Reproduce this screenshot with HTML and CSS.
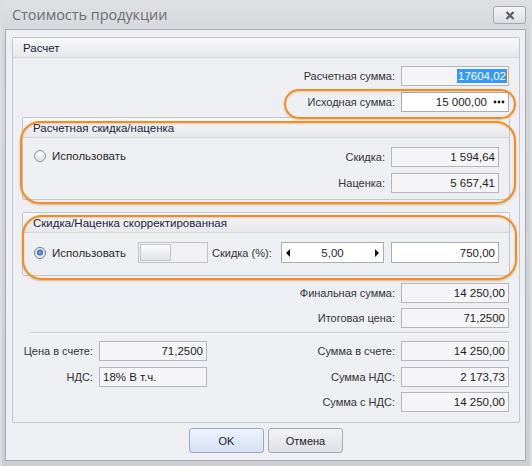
FILE: index.html
```html
<!DOCTYPE html>
<html lang="ru">
<head>
  <meta charset="UTF-8" />
  <title>Стоимость продукции</title>
  <link rel="stylesheet" href="styles.css">
</head>
<body>
  <div class="window">
    <div class="titlebar">
      <span class="title">Стоимость продукции</span>
      <button class="close">
        <svg width="10" height="9" viewBox="0 0 10 9"><path d="M1.5 1 L8.5 8 M8.5 1 L1.5 8" stroke="#5b5c62" stroke-width="2.2"/></svg>
      </button>
    </div>

    <div class="client">
      <div class="group main">
        <div class="group-head">Расчет</div>
        <div class="main-body">
          <div class="row first">
            <label>Расчетная сумма:</label>
            <div class="field tight"><span class="sel">17604,02</span><span class="caret"></span></div>
          </div>
          <div class="row">
            <label>Исходная сумма:</label>
            <div class="field edit">15 000,00
              <svg class="dots" width="12" height="4" viewBox="0 0 12 4"><circle cx="2" cy="2" r="1.4"/><circle cx="6" cy="2" r="1.4"/><circle cx="10" cy="2" r="1.4"/></svg>
            </div>
          </div>

          <div class="group sub calc">
            <div class="group-head">Расчетная скидка/наценка</div>
            <div class="sub-body">
              <div class="option"><span class="radio"></span>Использовать</div>
              <div class="rows">
                <div class="row"><label>Скидка:</label><div class="field">1 594,64</div></div>
                <div class="row"><label>Наценка:</label><div class="field">5 657,41</div></div>
              </div>
            </div>
          </div>

          <div class="group sub fixed">
            <div class="group-head">Скидка/Наценка скорректированная</div>
            <div class="sub-body line">
              <div class="option wide"><span class="radio on"></span>Использовать</div>
              <div class="track"><div class="thumb"></div></div>
              <label class="spin-label">Скидка (%):</label>
              <div class="spin"><span class="arrow left"></span>5,00<span class="arrow right"></span></div>
              <div class="field edit tall">750,00</div>
            </div>
          </div>

          <div class="row final">
            <label>Финальная сумма:</label>
            <div class="field">14 250,00</div>
          </div>
          <div class="row">
            <label>Итоговая цена:</label>
            <div class="field">71,2500</div>
          </div>

          <div class="sep"></div>

          <div class="invoice">
            <div class="lcol">
              <div class="row"><label>Цена в счете:</label><div class="field">71,2500</div></div>
              <div class="row"><label>НДС:</label><div class="field left">18% В т.ч.</div></div>
            </div>
            <div class="rcol">
              <div class="row"><label>Сумма в счете:</label><div class="field">14 250,00</div></div>
              <div class="row"><label>Сумма НДС:</label><div class="field">2 173,73</div></div>
              <div class="row"><label>Сумма с НДС:</label><div class="field">14 250,00</div></div>
            </div>
          </div>
        </div>
      </div>

      <div class="buttons">
        <button class="btn default">OK</button>
        <button class="btn">Отмена</button>
      </div>
    </div>

    <div class="ring ring-source"></div>
    <div class="ring ring-calc"></div>
    <div class="ring ring-fixed"></div>
  </div>
</body>
</html>
```

FILE: styles.css
```css
* {
  box-sizing: border-box;
}
body {
  margin: 0;
  background: #cfd0d5;
  font-family: "Liberation Sans", Arial, sans-serif;
  font-size: 11px;
  color: #2a2a2e;
}
.window {
  position: relative;
  width: 532px;
  height: 466px;
  display: flex;
  flex-direction: column;
  background: linear-gradient(#dfe0e3, #d3d4d9 40px, #cdced3);
  box-shadow: inset 2px 0 0 #dcdde1, inset -2px 0 0 #dcdde1;
}
.titlebar {
  height: 29px;
  display: flex;
  justify-content: space-between;
  align-items: flex-start;
  padding: 0 6px 0 12px;
}
.title {
  font-family: "Open Sans", sans-serif;
  font-size: 14.4px;
  line-height: 29px;
  color: #6b6c73;
}
.close {
  margin-top: 6px;
  width: 33px;
  height: 18px;
  padding: 0;
  border: 1px solid #a6a7ad;
  border-radius: 3px;
  background: linear-gradient(#f4f4f6, #dddee2);
  display: flex;
  align-items: center;
  justify-content: center;
}
.client {
  margin: 0 6px 5px 5px;
  height: 432px;
  border: 1px solid #a9aab0;
  background: #eeeff2;
  padding: 7px 5px 0 6px;
}
.group {
  border: 1px solid #c5c6cb;
  border-radius: 2px;
  background: #eeeff2;
}
.group-head {
  height: 20px;
  padding-left: 10px;
  display: flex;
  align-items: center;
  border-bottom: 1px solid #d6d7db;
  background: linear-gradient(#f7f7f9, #e7e8ec);
  color: #20233c;
  font-size: 11.5px;
}
.main-body {
  padding: 8px 0 10px 0;
}
.row {
  display: flex;
  justify-content: flex-end;
  align-items: center;
  gap: 6px;
  padding-right: 10px;
  margin-top: 6px;
}
.row.first {
  margin-top: 0;
}
.row label {
  color: #333338;
}
.field {
  width: 108px;
  height: 20px;
  border: 1px solid #b5b6bc;
  background: #f5f5f7;
  display: flex;
  align-items: center;
  justify-content: flex-end;
  padding: 0 3px;
  color: #1e1e22;
  font-size: 11.5px;
}
.field.edit {
  background: #fff;
  border-color: #abadb4;
}
.field.tall {
  height: 21px;
}
.field.left {
  justify-content: flex-start;
}
.field.tight {
  padding-right: 1px;
}
.sel {
  background: #3399ff;
  color: #fff;
  line-height: 14px;
  padding-left: 1px;
}
.caret {
  width: 1px;
  height: 14px;
  background: #c9722a;
}
.dots {
  margin-left: 6px;
  fill: #1a1a1a;
}
.sub {
  margin: 5px 9px 0 9px;
}
.fixed {
  margin-top: 12px;
}
.sub-body {
  display: flex;
  padding: 9px 0 6px 11px;
}
.sub-body .rows {
  flex: 1;
}
.sub-body .rows .row:first-child {
  margin-top: 0;
}
.option {
  display: flex;
  align-items: center;
  gap: 6px;
  height: 20px;
  margin-top: -1px;
  font-size: 11.5px;
}
.radio {
  width: 12px;
  height: 12px;
  border-radius: 50%;
  border: 1px solid #8f9096;
  background: radial-gradient(circle at 50% 35%, #ffffff, #d9d9dd 70%);
  box-shadow: inset 0 0 0 1px #f4f4f6;
}
.radio.on {
  border-color: #6d7790;
  background: radial-gradient(circle at 50% 45%, #8fb0ee 0, #3a63c4 2.6px, #e4e6ee 3.4px, #cfd1d8 100%);
}
.sub-body.line {
  align-items: center;
  padding: 9px 10px 12px 11px;
}
.option.wide {
  width: 104px;
  margin-top: 0;
}
.track {
  width: 70px;
  height: 21px;
  border: 1px solid #c2c3c8;
  background: #f1f1f3;
  padding: 1px;
}
.thumb {
  width: 31px;
  height: 100%;
  border: 1px solid #c3c4c9;
  background: linear-gradient(#fbfbfc, #e2e3e7);
}
.spin-label {
  margin-left: 4px;
  color: #333338;
}
.spin {
  margin-left: auto;
  width: 103px;
  height: 21px;
  border: 1px solid #abadb4;
  background: #fff;
  display: flex;
  align-items: center;
  justify-content: space-between;
  padding: 0 4px;
  margin-right: 7px;
  font-size: 11.5px;
}
.arrow {
  width: 0;
  height: 0;
  border-top: 4px solid transparent;
  border-bottom: 4px solid transparent;
}
.arrow.left {
  border-right: 4px solid #111;
}
.arrow.right {
  border-left: 4px solid #111;
}
.final {
  margin-top: 7px;
}
.final + .row {
  margin-top: 5px;
}
.sep {
  height: 2px;
  margin: 4px 10px 0 17px;
  border-top: 1px solid #cbccd1;
  border-bottom: 1px solid #f9f9fb;
}
.invoice {
  display: flex;
  justify-content: space-between;
  margin-top: 7px;
}
.lcol .row {
  justify-content: flex-start;
}
.lcol .row:first-child,
.rcol .row:first-child {
  margin-top: 0;
}
.lcol label {
  width: 80px;
  text-align: right;
}
.rcol .row:last-child {
  margin-top: 5px;
}
.buttons {
  display: flex;
  justify-content: center;
  gap: 4px;
  margin-top: 5px;
}
.btn {
  width: 75px;
  height: 25px;
  border: 1px solid #a7a9b0;
  border-radius: 3px;
  background: linear-gradient(#f3f3f5, #dedfe3);
  font: inherit;
  color: #202024;
}
.btn.default {
  border-color: #9ea8be;
  background: linear-gradient(#eef3fc, #d5e0f5);
}
.ring {
  position: absolute;
  border: 2px solid #f48d1f;
  box-shadow: 0 1px 2px rgba(120, 60, 0, 0.3), inset 0 1px 2px rgba(120, 60, 0, 0.2);
  pointer-events: none;
}
.ring-source {
  left: 284px;
  top: 89px;
  width: 232px;
  height: 30px;
  border-radius: 15px;
}
.ring-calc {
  left: 20px;
  top: 121px;
  width: 496px;
  height: 83px;
  border-radius: 20px;
}
.ring-fixed {
  left: 22px;
  top: 215px;
  width: 495px;
  height: 65px;
  border-radius: 20px;
}
```
